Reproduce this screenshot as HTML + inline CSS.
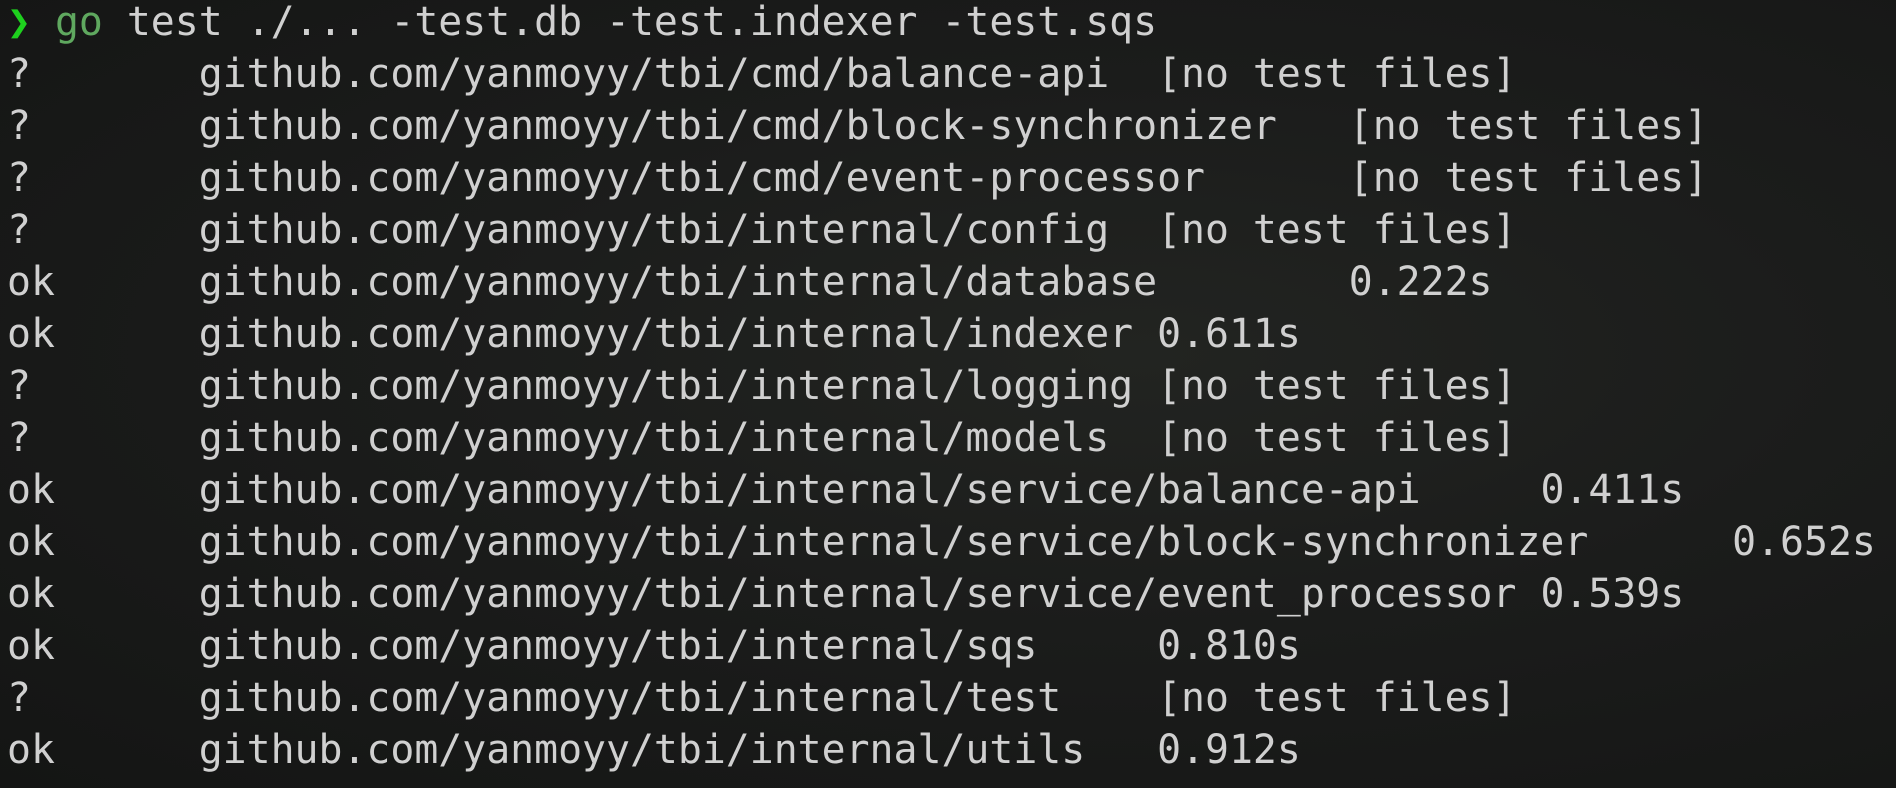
<!DOCTYPE html>
<html><head><style>
html,body{margin:0;padding:0;}
body{width:1896px;height:788px;overflow:hidden;background:#181918;
background-image:radial-gradient(ellipse at 60% 45%,#222421 0%,#1b1c1b 45%,#141514 100%);}
pre{margin:0;position:absolute;left:7px;top:-4px;font-family:"DejaVu Sans Mono","Liberation Mono",monospace;font-size:39.8px;line-height:52px;color:#d0d0d0;tab-size:8;-moz-tab-size:8;}
.p{color:#1ed01e;}
.g{color:#5fa85f;}
</style></head><body>
<pre><span class="p">❯</span> <span class="g">go</span> test ./... -test.db -test.indexer -test.sqs
?	github.com/yanmoyy/tbi/cmd/balance-api	[no test files]
?	github.com/yanmoyy/tbi/cmd/block-synchronizer	[no test files]
?	github.com/yanmoyy/tbi/cmd/event-processor	[no test files]
?	github.com/yanmoyy/tbi/internal/config	[no test files]
ok	github.com/yanmoyy/tbi/internal/database	0.222s
ok	github.com/yanmoyy/tbi/internal/indexer	0.611s
?	github.com/yanmoyy/tbi/internal/logging	[no test files]
?	github.com/yanmoyy/tbi/internal/models	[no test files]
ok	github.com/yanmoyy/tbi/internal/service/balance-api	0.411s
ok	github.com/yanmoyy/tbi/internal/service/block-synchronizer	0.652s
ok	github.com/yanmoyy/tbi/internal/service/event_processor	0.539s
ok	github.com/yanmoyy/tbi/internal/sqs	0.810s
?	github.com/yanmoyy/tbi/internal/test	[no test files]
ok	github.com/yanmoyy/tbi/internal/utils	0.912s</pre>
</body></html>
